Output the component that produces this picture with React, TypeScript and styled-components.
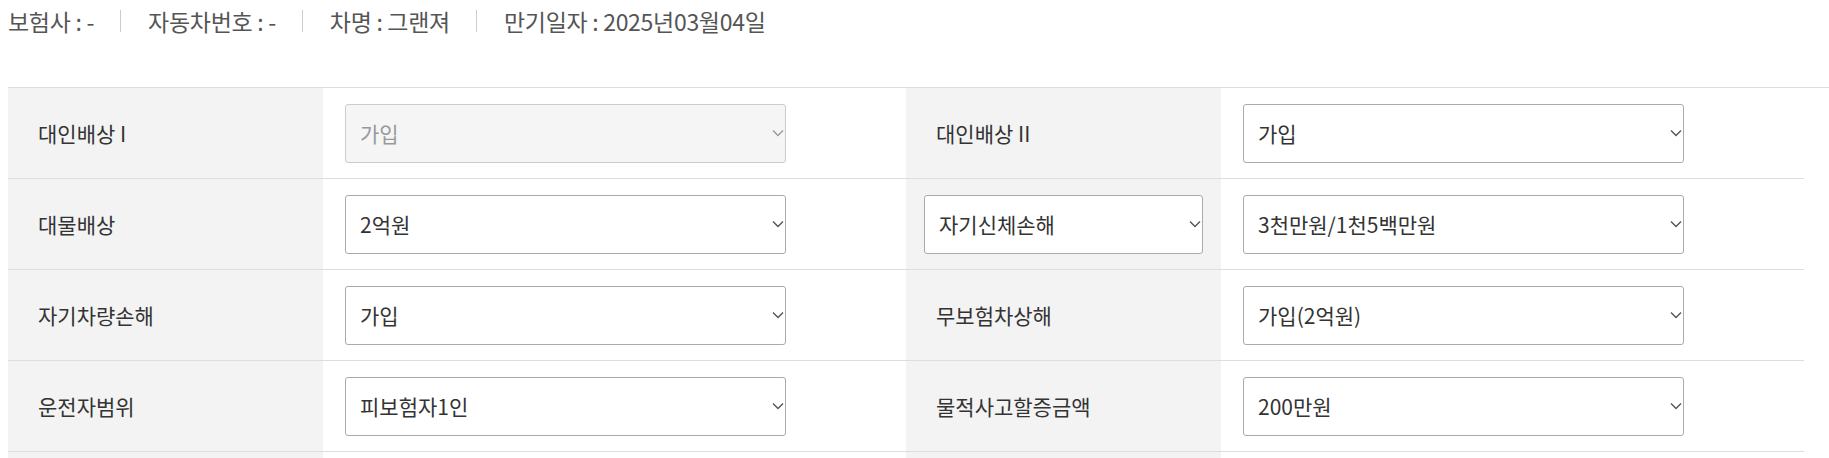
import React from 'react';
import styled, { createGlobalStyle } from 'styled-components';

interface Field {
  label: string;
  value: string;
  options: string[];
  disabled?: boolean;
}

interface RowData {
  left: Field;
  right: Field;
  rightLabelSelect?: string[];
}

const rows: RowData[] = [
  {
    left: { label: '대인배상 I', value: '가입', options: ['가입'], disabled: true },
    right: { label: '대인배상 II', value: '가입', options: ['가입', '미가입'] },
  },
  {
    left: { label: '대물배상', value: '2억원', options: ['2억원', '3억원', '5억원', '10억원'] },
    right: {
      label: '자기신체손해',
      value: '3천만원/1천5백만원',
      options: ['3천만원/1천5백만원', '5천만원/1천5백만원', '1억원/2천만원'],
    },
    rightLabelSelect: ['자기신체손해', '자동차상해'],
  },
  {
    left: { label: '자기차량손해', value: '가입', options: ['가입', '미가입'] },
    right: { label: '무보험차상해', value: '가입(2억원)', options: ['가입(2억원)', '미가입'] },
  },
  {
    left: { label: '운전자범위', value: '피보험자1인', options: ['피보험자1인', '부부한정', '가족한정', '누구나'] },
    right: { label: '물적사고할증금액', value: '200만원', options: ['50만원', '100만원', '150만원', '200만원'] },
  },
];

const App: React.FC = () => {
  return (
    <>
      <GlobalStyle />
      <Page>
        <InfoBar>
          <InfoItem>보험사 : -</InfoItem>
          <InfoItem>자동차번호 : -</InfoItem>
          <InfoItem>차명 : 그랜져</InfoItem>
          <InfoItem>만기일자 : 2025년03월04일</InfoItem>
        </InfoBar>
        <Section>
          {rows.map((row) => (
            <Row key={row.left.label}>
              <LabelCell>{row.left.label}</LabelCell>
              <ValueCell>
                <Dropdown field={row.left} />
              </ValueCell>
              {row.rightLabelSelect ? (
                <LabelCell $hasSelect>
                  <SelectWrap $full>
                    <Select defaultValue={row.right.label}>
                      {row.rightLabelSelect.map((o) => (
                        <option key={o}>{o}</option>
                      ))}
                    </Select>
                    <Chevron />
                  </SelectWrap>
                </LabelCell>
              ) : (
                <LabelCell>{row.right.label}</LabelCell>
              )}
              <ValueCell>
                <Dropdown field={row.right} />
              </ValueCell>
            </Row>
          ))}
          {/* next row, only its top edge shows in the frame */}
          <Row>
            <LabelCell />
            <ValueCell />
            <LabelCell />
            <ValueCell />
          </Row>
        </Section>
      </Page>
    </>
  );
};

const Dropdown: React.FC<{ field: Field }> = ({ field }) => (
  <SelectWrap>
    <Select defaultValue={field.value} disabled={field.disabled}>
      {field.options.map((o) => (
        <option key={o}>{o}</option>
      ))}
    </Select>
    <Chevron $muted={field.disabled} />
  </SelectWrap>
);

const Chevron: React.FC<{ $muted?: boolean }> = ({ $muted }) => (
  <ChevronIcon width="12" height="8" viewBox="0 0 12 8" aria-hidden="true">
    <polyline
      points="1,1.5 6,6.5 11,1.5"
      fill="none"
      stroke={$muted ? '#9a9a9a' : '#555'}
      strokeWidth="1.4"
    />
  </ChevronIcon>
);

const GlobalStyle = createGlobalStyle`
  html, body {
    margin: 0;
    padding: 0;
    overflow: hidden;
    background: #fff;
  }
  body {
    font-family: "Noto Sans CJK KR", "Noto Sans", sans-serif;
  }
`;

const Page = styled.div`
  padding: 10px 0 0 8px;
`;

const InfoBar = styled.div`
  display: flex;
  align-items: center;
  height: 22px;
`;

const InfoItem = styled.span`
  font-size: 23px;
  line-height: 22px;
  letter-spacing: -0.3px;
  color: #555;
  padding: 0 26px 0 27px;
  border-left: 1px solid #ccc;

  &:first-child {
    padding-left: 0;
    border-left: none;
  }
`;

const Section = styled.div`
  margin-top: 55px;
  border-top: 1px solid #ddd;
`;

const Row = styled.div`
  display: grid;
  grid-template-columns: 315px 583px 315px 583px;
  width: 1796px;
  height: 91px;
  box-sizing: border-box;
  border-bottom: 1px solid #ddd;
`;

const LabelCell = styled.div<{ $hasSelect?: boolean }>`
  display: flex;
  align-items: center;
  background: #f3f3f3;
  padding: ${(p) => (p.$hasSelect ? '0 18px' : '0 30px')};
  font-size: 21px;
  color: #333;
`;

const ValueCell = styled.div`
  display: flex;
  align-items: center;
  padding-left: 22px;
`;

const SelectWrap = styled.div<{ $full?: boolean }>`
  position: relative;
  width: ${(p) => (p.$full ? '100%' : '441px')};
`;

const Select = styled.select`
  appearance: none;
  width: 100%;
  height: 59px;
  box-sizing: border-box;
  padding: 0 24px 0 14px;
  border: 1px solid #aaa;
  border-radius: 3px;
  background: #fff;
  font-family: "Noto Sans CJK KR", "Noto Sans", sans-serif;
  font-size: 21px;
  color: #333;
  outline: none;

  &:disabled {
    background: #f5f5f5;
    border-color: #ccc;
    color: #999;
    opacity: 1;
  }
`;

const ChevronIcon = styled.svg`
  position: absolute;
  right: 2px;
  top: 50%;
  transform: translateY(-50%);
  pointer-events: none;
`;

export default App;
